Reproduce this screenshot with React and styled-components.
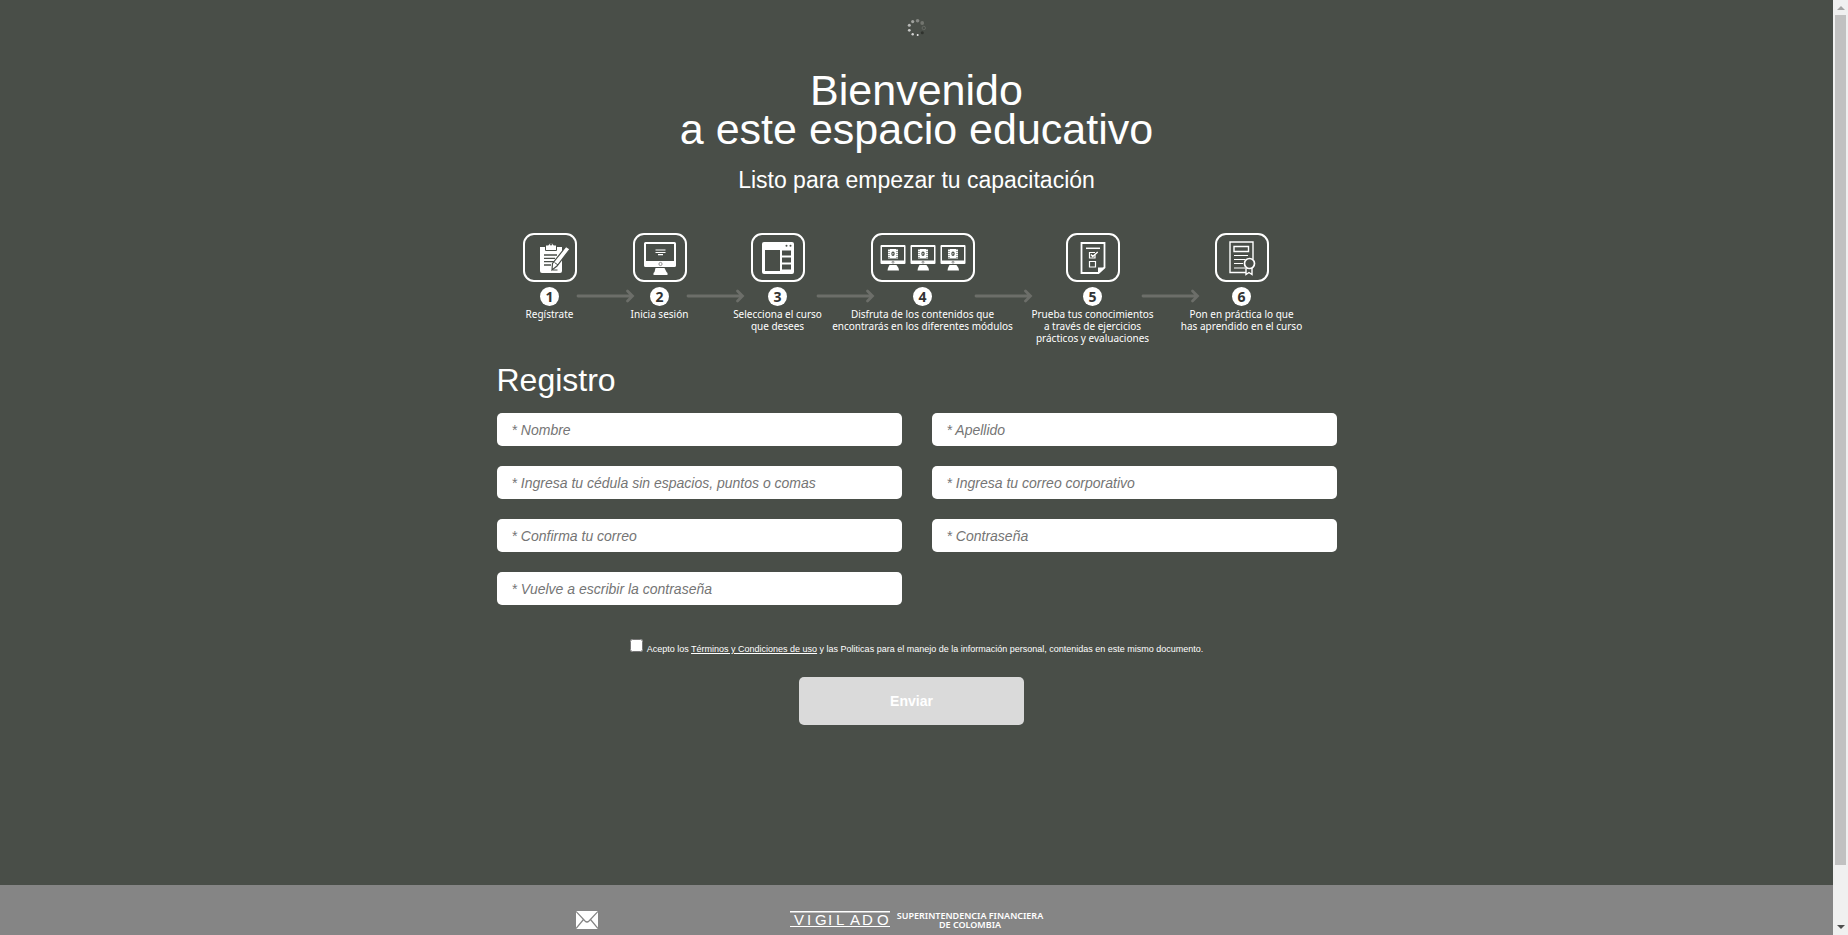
import React from "react";
import styled, { createGlobalStyle } from "styled-components";

const GlobalStyle = createGlobalStyle`
  *, *::before, *::after { box-sizing: border-box; }
  body {
    margin: 0;
    background: #494e48;
    color: #fff;
    font-family: "Liberation Sans", Arial, sans-serif;
  }
`;

const Viewport = styled.div`
  display: grid;
  grid-template-columns: minmax(0, 1fr) 15px;
  height: 100vh;
`;

const Page = styled.div`
  display: flex;
  flex-direction: column;
  overflow-y: auto;
  scrollbar-width: none;
`;

const Main = styled.main`
  flex: none;
  display: flex;
  flex-direction: column;
  align-items: center;
  padding: 18px 15px 160px;
`;

const Content = styled.div`
  width: 100%;
  max-width: 840px;
`;

const Spinner = styled.svg`
  display: block;
  width: 20px;
  height: 20px;
`;

const Title = styled.h1`
  margin: 33px 0 0;
  font-size: 43px;
  line-height: 39px;
  font-weight: 400;
  text-align: center;
`;

const Subtitle = styled.p`
  margin: 18px 0 40px;
  font-size: 23px;
  line-height: 26px;
  text-align: center;
`;

const Steps = styled.ol`
  display: grid;
  grid-template-columns: 54px 56px 54px 64px 54px 66px 104px 91px 54px 95px 54px;
  margin: 0;
  padding: 0 0 0 26px;
  list-style: none;
  font-family: "Noto Sans", "Open Sans", sans-serif;
`;

const Step = styled.li`
  display: flex;
  flex-direction: column;
  align-items: center;
`;

const StepIcon = styled.div`
  display: flex;
  align-items: center;
  justify-content: center;
  gap: 4px;
  width: 100%;
  height: 49px;
  border: 2px solid #fff;
  border-radius: 11px;
`;

const StepNumber = styled.span`
  width: 19px;
  height: 19px;
  margin: 5px 0 2px;
  border-radius: 50%;
  background: #fff;
  color: #333;
  font-size: 14px;
  line-height: 19px;
  font-weight: 700;
  text-align: center;
`;

const Caption = styled.span`
  font-size: 10px;
  line-height: 12px;
  text-align: center;
  white-space: pre;
`;

const ArrowCell = styled.li`
  padding-top: 57px;
  padding-left: ${(p) => p.$lead || 0}px;
`;

const ArrowDrawing = styled.svg`
  display: block;
  width: 57px;
  height: 13px;
  overflow: visible;
`;

const Heading = styled.h2`
  margin: 18px 0 15px;
  font-size: 32px;
  line-height: 36px;
  font-weight: 400;
`;

const Fields = styled.div`
  display: grid;
  grid-template-columns: 1fr 1fr;
  gap: 20px 30px;
`;

const Field = styled.input`
  width: 100%;
  height: 33px;
  padding: 0 15px;
  border: 0;
  border-radius: 5px;
  background: #fff;
  color: #333;
  font: italic 14px "Liberation Sans", Arial, sans-serif;
  &::placeholder { color: #757575; }
`;

const Terms = styled.div`
  display: flex;
  justify-content: center;
  gap: 4px;
  margin-top: 34px;
  font-size: 9px;
  line-height: 20px;
`;

const Check = styled.input`
  flex: none;
  width: 13px;
  height: 13px;
  margin: 0;
`;

const TermsLink = styled.a`
  color: #fff;
  text-decoration: underline;
`;

const SubmitRow = styled.div`
  display: flex;
  justify-content: center;
  padding: 18px 10px 0 0;
`;

const Submit = styled.button`
  width: 225px;
  height: 48px;
  border: 0;
  border-radius: 5px;
  background: #dadada;
  color: #fff;
  font: bold 14px "Liberation Sans", Arial, sans-serif;
`;

const Footer = styled.footer`
  flex: 1 0 110px;
  display: flex;
  justify-content: center;
  padding: 26px 15px;
  background: #858585;
`;

const FooterRow = styled.div`
  display: grid;
  grid-template-columns: 180px 1fr 180px;
  justify-items: center;
  align-items: start;
  width: 100%;
  max-width: 840px;
`;

const Logo = styled.div`
  display: flex;
  gap: 7px;
`;

const LogoMark = styled.svg`
  display: block;
  width: 100px;
  height: 17px;
`;

const LogoText = styled.span`
  font: 600 9px/9px "Noto Sans", sans-serif;
  text-align: center;
`;

const Scrollbar = styled.div`
  display: flex;
  flex-direction: column;
  align-items: center;
  background: #f0f0f0;
`;

const ScrollThumb = styled.div`
  width: 11px;
  flex: 1;
  margin-bottom: 55px;
  background: #c1c1c1;
`;

const ScrollArrow = styled.svg`
  display: block;
  width: 15px;
  height: 15px;
`;

const spinnerDots = [
  [10.6, 2.7, 1.8, "#858783"],
  [15.2, 5, 1.9, "#72756f"],
  [15.3, 14.7, 1.5, "#30332e"],
  [10.7, 17, 1, "#e8e8e8"],
  [5.7, 16.3, 1.2, "#d4d4d3"],
  [2.3, 12.3, 1.4, "#c6c7c5"],
  [2.3, 7.3, 1.5, "#b8b9b7"],
  [5.7, 3.6, 1.6, "#a0a29e"],
];

const Arrow = ({ lead }) => (
  <ArrowCell $lead={lead} role="presentation" aria-hidden="true">
    <ArrowDrawing viewBox="0 0 57 13" fill="none" stroke="#6c6e69" strokeWidth="2.8">
      <path d="M1 6h54M50.5 1l5 5-5 5" strokeLinecap="round" />
    </ArrowDrawing>
  </ArrowCell>
);

const ClipboardIcon = () => (
  <svg width="32" height="34" viewBox="-4 0 32 34" overflow="visible">
    <path fill="#fff" d="M2 6h22v24a2 2 0 0 1-2 2H4a2 2 0 0 1-2-2z" />
    <path fill="#fff" stroke="#494e48" strokeWidth="1" d="M7.500 9.500V4h3a2.600 2.600 0 0 1 5 0h3v5.500z" />
    <circle cx="13" cy="3.500" r="1" fill="#494e48" />
    <path stroke="#494e48" strokeWidth="1.300" d="M6 14h13M6 17.300h11M6 20.600h10M6 24h7" />
    <path fill="#fff" stroke="#494e48" strokeWidth="1.200" d="M28 5.500l4 2.500-13 17-5 4 .5-6.500z" />
    <path fill="none" stroke="#494e48" d="M16.500 21.500l3.500 2.500M14.500 29h5" />
  </svg>
);

const MonitorIcon = () => (
  <svg width="34" height="34" viewBox="0 0 34 34">
    <path fill="#fff" fillRule="evenodd" d="M2.500 1h29q1.500 0 1.500 1.500v22q0 1.500-1.500 1.500h-29q-1.500 0-1.500-1.500v-22q0-1.500 1.500-1.500zM3 3v17h28V3z" />
    <path fill="#fff" d="M12.500 27h9l2 4 1 1v2h-14v-2l1-1z" />
    <path stroke="#fff" strokeWidth="1.200" d="M12.500 9h10M12.500 11.500h10M15 13.700h5" />
    <circle cx="17.500" cy="23" r="1.600" fill="none" stroke="#777" strokeWidth=".8" />
  </svg>
);

const BrowserIcon = () => (
  <svg width="34" height="34" viewBox="0 0 34 34">
    <rect x="1" y="1" width="32" height="32" rx="2" fill="#fff" />
    <path fill="#494e48" d="M4 9h15v21H4zM21 9.500h9v5h-9zM21 16.500h9v5h-9zM21 23.500h9v5h-9z" />
    <circle cx="25.500" cy="4.800" r="1" fill="#494e48" />
    <circle cx="29.500" cy="4.800" r="1" fill="#494e48" />
  </svg>
);

const VideoMonitorIcon = () => (
  <svg width="26" height="26" viewBox="0 0 26 26">
    <path fill="#fff" fillRule="evenodd" d="M1.500 0h23q1 0 1 1v17q0 1-1 1h-23q-1 0-1-1V1q0-1 1-1zM2 2v13.500h22V2z" />
    <path fill="#fff" d="M9.500 20h7l2 3 .5 2.500H7.500L8 23zM8 4h10v9.500H8z" />
    <path stroke="#494e48" strokeWidth="1" strokeDasharray="1 1" d="M9 4v9.500M17 4v9.500" />
    <ellipse cx="13" cy="8.700" rx="1.700" ry="2.200" fill="#494e48" />
    <path fill="#fff" d="M12.500 7.700l1.300 1-1.300 1z" />
    <circle cx="13" cy="17.200" r="1" fill="none" stroke="#666" strokeWidth=".7" />
  </svg>
);

const ChecklistIcon = () => (
  <svg width="26" height="34" viewBox="0 0 26 34" fill="none" stroke="#fff">
    <path strokeWidth="1.800" d="M1.500 2h23v24.500L18.500 32h-17z" />
    <path fill="#fff" stroke="none" d="M18 32.500v-6h7z" />
    <path strokeWidth="1.500" d="M6 7.300h14" />
    <path strokeWidth="1.200" d="M15 13.500v3.500H9.500v-5.500H15M9.500 20.500h6v5.500h-6z" />
    <path strokeWidth="1.400" d="M11 13.500l1.700 2 5-4.500" />
  </svg>
);

const CertificateIcon = () => (
  <svg width="28" height="36" viewBox="0 0 28 36" fill="none" stroke="#fff" strokeWidth="1.400">
    <path d="M18 32.500H2V2h23v17" />
    <path d="M6 6.500h14.500v5H6z" />
    <path strokeWidth="1.200" d="M6 15.500h14M6 19.500h11M6 23.500h9M6 28h11" />
    <path d="M18 28v6.500l3-2 3 2V28" />
    <circle cx="21.500" cy="23.500" r="5" fill="#494e48" strokeWidth="1.700" />
  </svg>
);

const VideoMonitors = () => (
  <>
    <VideoMonitorIcon />
    <VideoMonitorIcon />
    <VideoMonitorIcon />
  </>
);

const steps = [
  { icon: ClipboardIcon, text: "Regístrate" },
  { icon: MonitorIcon, text: "Inicia sesión", lead: 0 },
  { icon: BrowserIcon, text: "Selecciona el curso\nque desees", lead: 0 },
  { icon: VideoMonitors, text: "Disfruta de los contenidos que\nencontrarás en los diferentes módulos", lead: 12 },
  { icon: ChecklistIcon, text: "Prueba tus conocimientos\na través de ejercicios\nprácticos y evaluaciones", lead: 0 },
  { icon: CertificateIcon, text: "Pon en práctica lo que\nhas aprendido en el curso", lead: 22 },
];

const fields = [
  ["nombre", "text", "* Nombre"],
  ["apellido", "text", "* Apellido"],
  ["cedula", "text", "* Ingresa tu cédula sin espacios, puntos o comas"],
  ["correo", "email", "* Ingresa tu correo corporativo"],
  ["correo2", "email", "* Confirma tu correo"],
  ["clave", "password", "* Contraseña"],
  ["clave2", "password", "* Vuelve a escribir la contraseña"],
];

export default function App() {
  return (
    <>
      <GlobalStyle />
      <Viewport>
        <Page>
          <Main>
            <Spinner viewBox="0 0 20 20" aria-hidden="true">
              {spinnerDots.map(([cx, cy, r, fill]) => (
                <circle key={`${cx}-${cy}`} cx={cx} cy={cy} r={r} fill={fill} />
              ))}
              <circle cx="16.800" cy="10" r="1.700" fill="none" stroke="#686b65" strokeWidth=".9" />
            </Spinner>
            <Content>
              <Title>
                Bienvenido
                <br />a este espacio educativo
              </Title>
              <Subtitle>Listo para empezar tu capacitación</Subtitle>
              <Steps>
                {steps.map(({ icon: Icon, text, lead }, i) => (
                  <React.Fragment key={text}>
                    {i > 0 && <Arrow lead={lead} />}
                    <Step>
                      <StepIcon aria-hidden="true">
                        <Icon />
                      </StepIcon>
                      <StepNumber>{i + 1}</StepNumber>
                      <Caption>{text}</Caption>
                    </Step>
                  </React.Fragment>
                ))}
              </Steps>
              <form onSubmit={(e) => e.preventDefault()}>
                <Heading>Registro</Heading>
                <Fields>
                  {fields.map(([name, type, label]) => (
                    <Field key={name} name={name} type={type} placeholder={label} aria-label={label} />
                  ))}
                </Fields>
                <Terms>
                  <Check type="checkbox" id="terms" />
                  <label htmlFor="terms">
                    Acepto los <TermsLink href="#terminos">Términos y Condiciones de uso</TermsLink> y las
                    Politicas para el manejo de la información personal, contenidas en este mismo documento.
                  </label>
                </Terms>
                <SubmitRow>
                  <Submit type="submit">Enviar</Submit>
                </SubmitRow>
              </form>
            </Content>
          </Main>
          <Footer>
            <FooterRow>
              <a href="#contacto" aria-label="Contacto">
                <svg width="22" height="18" viewBox="0 0 22 18" display="block">
                  <path fill="#fff" d="M0 0h22v18H0z" />
                  <path fill="none" stroke="#858585" strokeWidth="1.200" d="M0 .5l9 9.500q2 2 4 0l9-9.500M0 17.500l7.500-9M22 17.500l-7.500-9" />
                </svg>
              </a>
              <Logo>
                <LogoMark viewBox="0 0 100 17" fill="#fff">
                  <path d="M0 0h100v1.500H0zM0 15h100v1H0z" />
                  <text x="4 17 25 38 46 60 72 87" y="14" fontSize="15" fontFamily="Liberation Sans">
                    VIGILADO
                  </text>
                </LogoMark>
                <LogoText>
                  SUPERINTENDENCIA FINANCIERA
                  <br />
                  DE COLOMBIA
                </LogoText>
              </Logo>
            </FooterRow>
          </Footer>
        </Page>
        <Scrollbar aria-hidden="true">
          <ScrollArrow viewBox="0 0 15 15">
            <path fill="#a3a3a3" d="M4 10h8L8 6z" />
          </ScrollArrow>
          <ScrollThumb />
          <ScrollArrow viewBox="0 0 15 15">
            <path fill="#505050" d="M4 5h8L8 9z" />
          </ScrollArrow>
        </Scrollbar>
      </Viewport>
    </>
  );
}
